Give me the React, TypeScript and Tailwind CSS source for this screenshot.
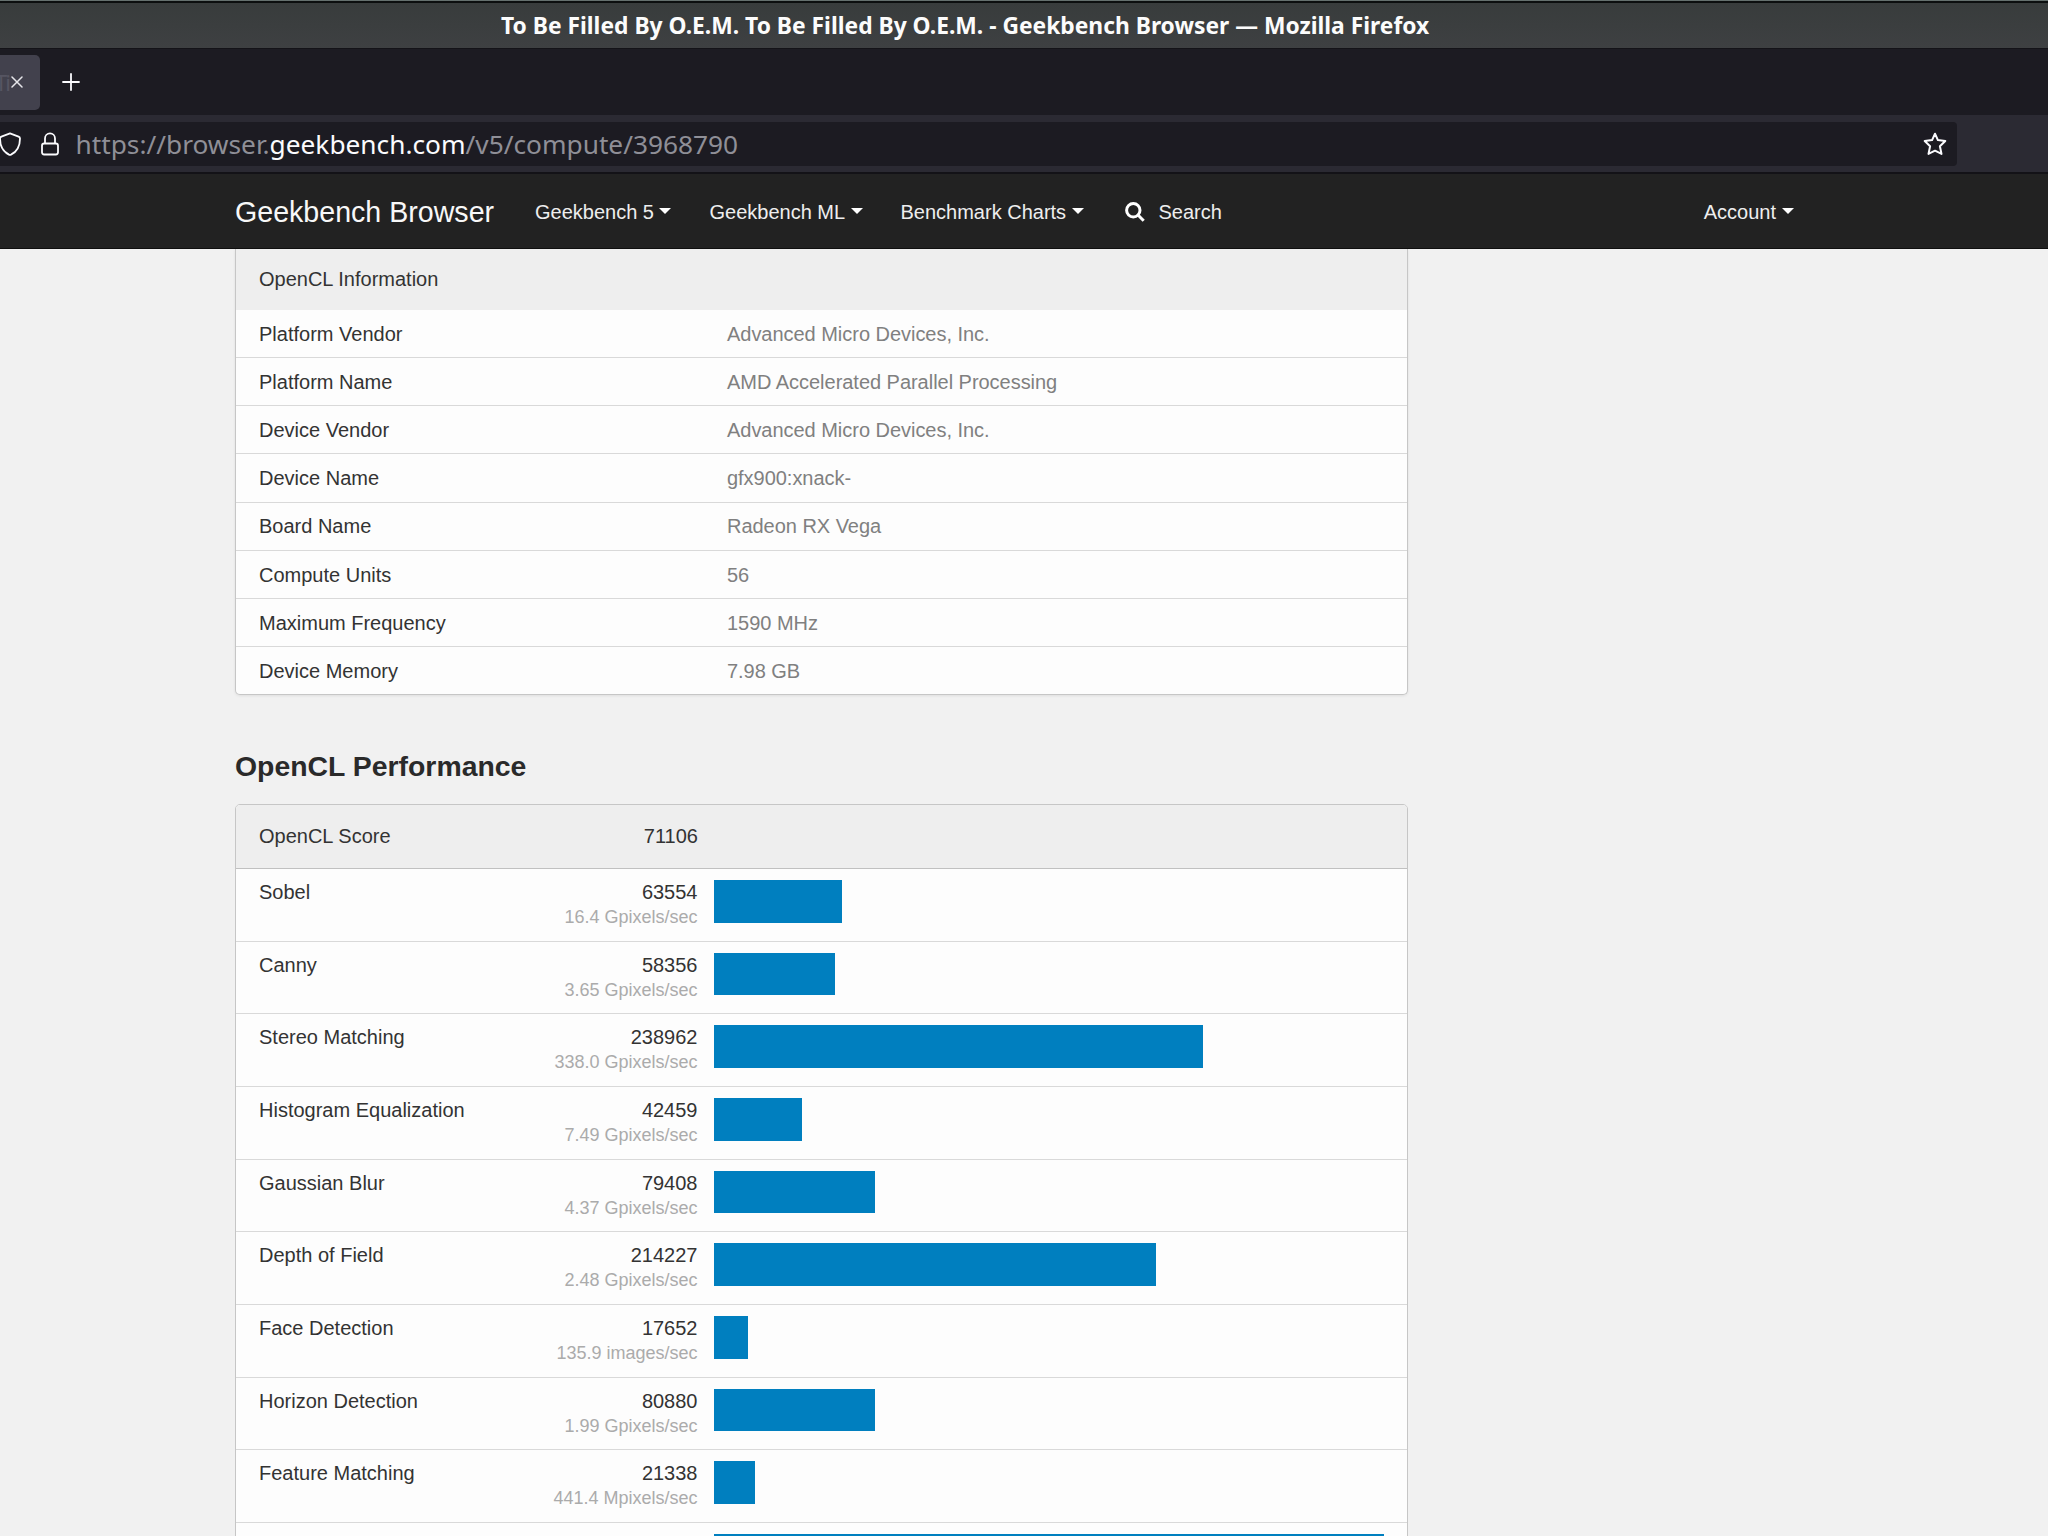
import type { ReactNode } from "react";

interface InfoRow {
  label: string;
  value: string;
}

interface Workload {
  name: string;
  score: string;
  rate: string;
  bar: number;
}

const info: InfoRow[] = [
  { label: "Platform Vendor", value: "Advanced Micro Devices, Inc." },
  { label: "Platform Name", value: "AMD Accelerated Parallel Processing" },
  { label: "Device Vendor", value: "Advanced Micro Devices, Inc." },
  { label: "Device Name", value: "gfx900:xnack-" },
  { label: "Board Name", value: "Radeon RX Vega" },
  { label: "Compute Units", value: "56" },
  { label: "Maximum Frequency", value: "1590 MHz" },
  { label: "Device Memory", value: "7.98 GB" },
];

// bar = width in px
const workloads: Workload[] = [
  { name: "Sobel", score: "63554", rate: "16.4 Gpixels/sec", bar: 128 },
  { name: "Canny", score: "58356", rate: "3.65 Gpixels/sec", bar: 121 },
  { name: "Stereo Matching", score: "238962", rate: "338.0 Gpixels/sec", bar: 489 },
  { name: "Histogram Equalization", score: "42459", rate: "7.49 Gpixels/sec", bar: 88 },
  { name: "Gaussian Blur", score: "79408", rate: "4.37 Gpixels/sec", bar: 161 },
  { name: "Depth of Field", score: "214227", rate: "2.48 Gpixels/sec", bar: 442 },
  { name: "Face Detection", score: "17652", rate: "135.9 images/sec", bar: 34 },
  { name: "Horizon Detection", score: "80880", rate: "1.99 Gpixels/sec", bar: 161 },
  { name: "Feature Matching", score: "21338", rate: "441.4 Mpixels/sec", bar: 41 },
  { name: "", score: "", rate: "", bar: 670 },
];

function WindowChrome() {
  return (
    <header className="shrink-0 font-['Noto_Sans',sans-serif]">
      <div className="h-[49px] border-t border-[#65706e] border-b border-b-[#141318] bg-[#3c3f40]">
        <div className="h-[47px] border-t-2 border-[#0c0f0f] bg-linear-to-b from-[#383c3c] to-[#3e4042]">
          <div className="pl-[501px] text-[22.82px] leading-[45px] font-bold whitespace-nowrap text-[#fcfcfc]">
            To Be Filled By O.E.M. To Be Filled By O.E.M. - Geekbench Browser — Mozilla Firefox
          </div>
        </div>
      </div>

      <div className="flex h-[66px] items-center bg-[#1c1b22]">
        <div className="flex h-[55px] w-[40px] items-center overflow-hidden rounded-r-[5px] bg-[#42414d]">
          <span className="-ml-[5px] w-[16px] shrink-0 text-[22px] tracking-[-2px] text-[#565562]">Ti</span>
          <svg width="12" height="12" viewBox="0 0 12 12" fill="none" stroke="#e6e6ea" strokeWidth="1.5" strokeLinecap="round">
            <path d="M1 1l10 10M11 1L1 11" />
          </svg>
        </div>
        <svg className="ml-[22px]" width="18" height="18" viewBox="0 0 18 18" fill="none" stroke="#fbfbfe" strokeWidth="1.8" strokeLinecap="round">
          <path d="M9 1v16M1 9h16" />
        </svg>
      </div>

      <div className="flex h-[59px] items-center border-b-2 border-[#131217] bg-[#2b2a33]">
        <div className="flex h-[44px] w-[1957px] items-center rounded-r-[4px] bg-[#1c1b22]">
          <svg className="-ml-[2px] shrink-0" width="24" height="24" viewBox="0 0 24 24" fill="none" stroke="#fbfbfe" strokeWidth="1.8" strokeLinejoin="round">
            <path d="M12 1.4L20.6 4.6C21.6 5 22 5.5 22 6.4C22 14 18.5 19.8 13 22.6Q12 23 11 22.6C5.5 19.8 2 14 2 6.4C2 5.5 2.4 5 3.4 4.6Z" />
          </svg>
          <svg className="ml-[18px] shrink-0" width="20" height="24" viewBox="0 0 20 24" fill="none" stroke="#fbfbfe" strokeWidth="1.8">
            <rect x="2" y="11.5" width="16" height="11" rx="2.2" />
            <path d="M5 11.5V6.4a5 5 0 0 1 10 0V11.5" />
          </svg>
          <span className="ml-[15.5px] text-[26.27px] leading-[42px] text-[#8f8f97]">
            https://browser.<span className="text-[#fbfbfe]">geekbench.com</span>/v5/compute/3968790
          </span>
          <svg className="mr-[10px] ml-auto" width="24" height="24" viewBox="0 0 24 24" fill="none" stroke="#fbfbfe" strokeWidth="2" strokeLinejoin="round">
            <path d="M12 1.7L14.9 8.1L22.3 9L16.9 14.2L18.5 21.9L12 18.7L5.5 21.9L7.1 14.2L1.7 9L9.1 8.1Z" />
          </svg>
        </div>
      </div>
    </header>
  );
}

function Caret() {
  return <span className="mt-[-3px] ml-[5.5px] border-x-[6px] border-t-[6px] border-x-transparent border-t-white" />;
}

function NavItem({ children, className }: { children: ReactNode; className?: string }) {
  return (
    <a className={`flex shrink-0 items-center text-xl whitespace-nowrap text-[#eeeeee] ${className ?? ""}`}>
      {children}
    </a>
  );
}

function Navbar() {
  return (
    <nav className="flex h-[75px] shrink-0 items-center border-b border-[#0f0f0f] bg-[#222222] pt-[2px] pl-[235px]">
      <a className="w-[300px] shrink-0 text-[28.6px] whitespace-nowrap text-[#f8f8f8]">Geekbench Browser</a>
      <NavItem className="w-[174.5px]">Geekbench 5<Caret /></NavItem>
      <NavItem className="w-[191px]">Geekbench ML<Caret /></NavItem>
      <NavItem className="w-[224px]">Benchmark Charts<Caret /></NavItem>
      <NavItem>
        <svg width="20" height="20" viewBox="0 0 20 20" fill="none" stroke="#fff" strokeWidth="3">
          <circle cx="8.3" cy="8.3" r="6.7" />
          <path d="M13 13l5.7 5.7" />
        </svg>
        <span className="ml-[14px]">Search</span>
      </NavItem>
      <NavItem className="mr-[254.5px] ml-auto">Account<Caret /></NavItem>
    </nav>
  );
}

export default function App() {
  return (
    <div className="flex h-[1536px] w-[2048px] flex-col overflow-hidden bg-[#f1f1f1] font-['Liberation_Sans',Arial,sans-serif] text-[#333333]">
      <WindowChrome />
      <Navbar />

      <main className="min-h-0 flex-1 overflow-hidden pl-[235px] text-xl">
        <section className="w-[1173px] rounded-b-[5px] border border-t-0 border-[#c6c6c6] bg-[#fdfdfd] shadow-[0_1px_3px_rgba(0,0,0,0.08)]">
          <div className="flex h-[61px] items-center bg-[#eeeeee] pb-[2px] pl-[23px]">OpenCL Information</div>
          {info.map((row) => (
            <div
              key={row.label}
              className="flex h-[48.17px] items-center border-b border-[#d9d9d9] pt-[0.5px] pl-[23px] last:h-[47px] last:border-b-0"
            >
              <span className="w-[468px]">{row.label}</span>
              <span className="tracking-[-0.03px] text-[#808080]">{row.value}</span>
            </div>
          ))}
        </section>

        <h2 className="mt-[52px] mb-[19px] text-[28.4px] leading-[38px] font-bold text-[#2a2a2a]">OpenCL Performance</h2>

        <section className="w-[1173px] rounded-t-[5px] border border-[#c6c6c6] bg-[#fdfdfd]">
          <div className="flex h-[64px] items-center rounded-t-[4px] border-b border-[#c0c0c0] bg-[#eeeeee] pb-[2px] pl-[23px]">
            <span className="w-[239px]">OpenCL Score</span>
            <span className="w-[200px] text-right">71106</span>
          </div>
          {workloads.map((w) => (
            <div key={w.name} className="flex h-[72.67px] border-b border-[#d9d9d9] pt-[11px] pl-[23px] leading-6">
              <span className="w-[239px]">{w.name}</span>
              <div className="w-[199.5px] text-right">
                <div>{w.score}</div>
                <div className="pt-px text-lg leading-6 text-[#ababab]">{w.rate}</div>
              </div>
              <div className="ml-[16.5px] h-[42.67px] bg-[#007fbf]" style={{ width: w.bar }} />
            </div>
          ))}
        </section>
      </main>
    </div>
  );
}
